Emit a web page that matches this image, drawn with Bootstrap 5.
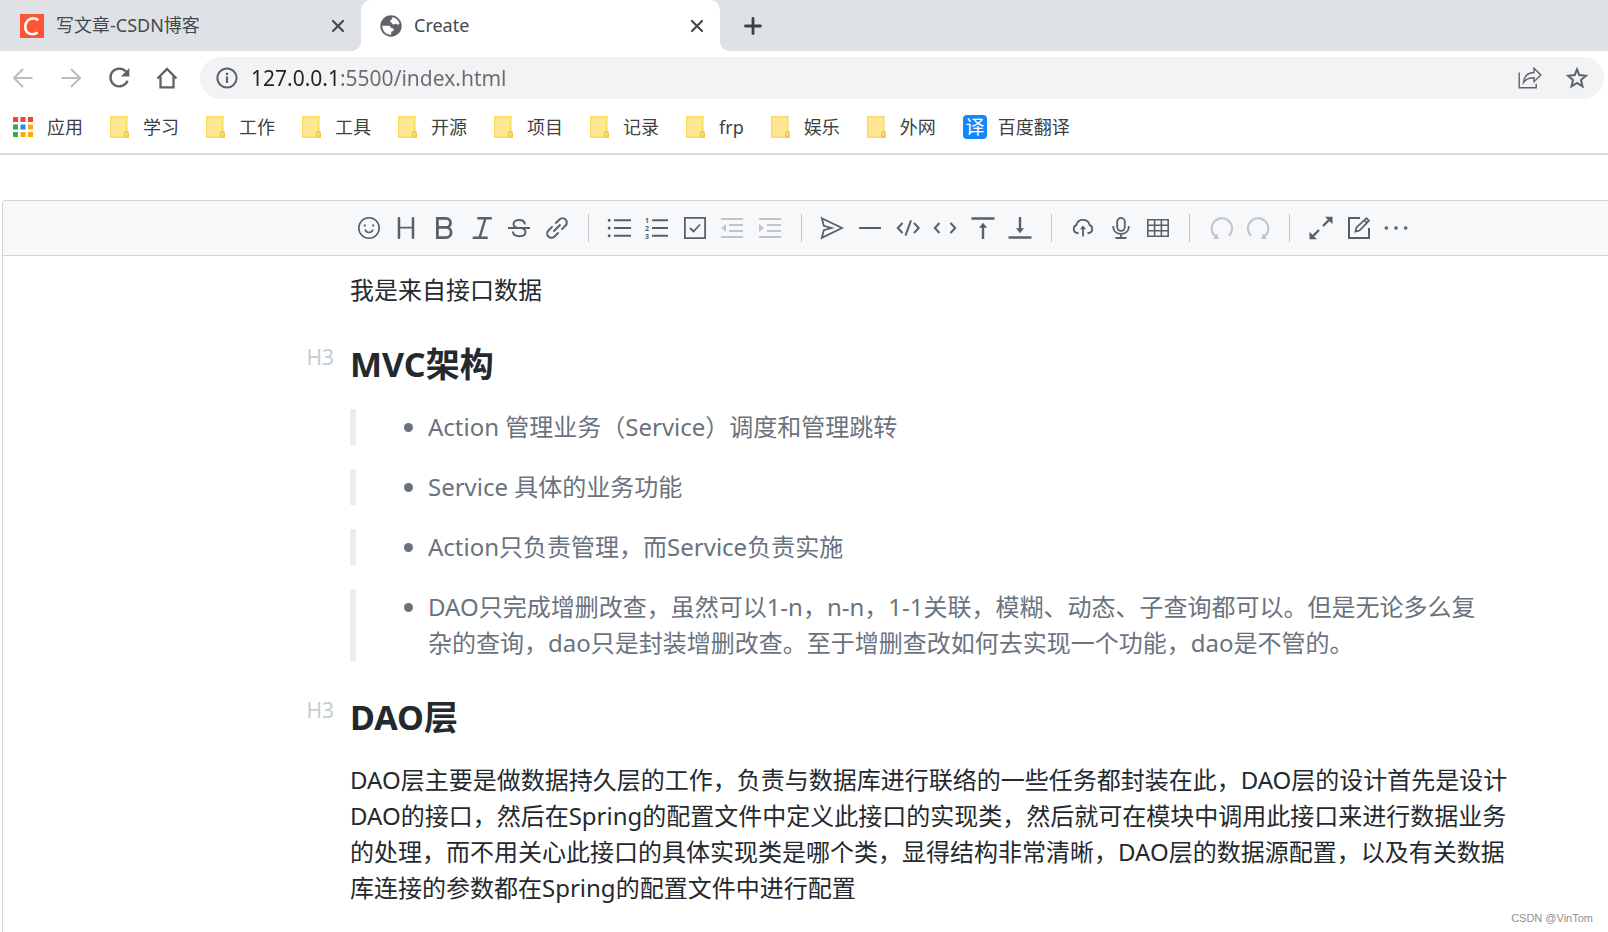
<!DOCTYPE html>
<html lang="zh-CN">
<head>
<meta charset="utf-8">
<meta name="viewport" content="width=device-width, initial-scale=1">
<title>Create</title>
<link href="https://cdn.jsdelivr.net/npm/bootstrap@5.3.0/dist/css/bootstrap.min.css" rel="stylesheet">
<style>
  body { font-family: "Noto Sans", "Noto Sans CJK SC", sans-serif; color: #24292e; background: #fff; font-size: 18px; }
  svg { display: block; flex: none; }
  button { border: 0; background: none; padding: 0; color: inherit; }

  /* browser chrome */
  .tab-strip { background: #dee1e6; height: 51px; color: #45494d; }
  .browser-tab { width: 361px; padding: 0 16px 0 20px; line-height: 51px; }
  .browser-tab a, .bookmarks a { color: inherit; text-decoration: none; }
  .browser-tab.current { background: #fff; border-radius: 10px 10px 0 0; width: 359px; padding-left: 19px; position: relative; }
  .browser-tab.current::before, .browser-tab.current::after { content: ""; position: absolute; bottom: 0; width: 10px; height: 10px; }
  .browser-tab.current::before { right: 100%; background: radial-gradient(circle at 0 0, #dee1e6 10px, #fff 10px); }
  .browser-tab.current::after { left: 100%; background: radial-gradient(circle at 100% 0, #dee1e6 10px, #fff 10px); }
  .nav-row { padding: 6px 4px 6px 0; color: #5f6368; }
  .nav-row > button { width: 48px; height: 42px; padding-right: 2px; }
  .nav-row > button:disabled { color: #babcbe; }
  .address { background: #f1f3f4; border-radius: 21px; height: 42px; margin-left: 8px; padding: 0 16px; }
  .address input { border: 0; outline: 0; min-width: 0; padding: 0; margin-left: 13px; font-size: 21px; line-height: 42px; color: #696c70;
    background: linear-gradient(to right, #202124 88px, #696c70 88px); -webkit-background-clip: text; background-clip: text; -webkit-text-fill-color: transparent; }
  .bookmarks { height: 50px; padding: 0 0 4px 13px; gap: 27px; border-bottom: 2px solid #dadada; color: #3c4043; line-height: 44px; }
  .bookmarks a { gap: 14px; }
  .bookmarks a:last-child { gap: 11px; }

  /* editor */
  .editor { margin: 45px 0 0 2px; border: solid #d1d5da; border-width: 1px 0 0 1px; border-radius: 4px 0 0 0; }
  .tool-strip { background: #f6f8fa; border-bottom: 1px solid #d1d5da; border-radius: 3px 0 0 0; height: 55px; padding-left: 347px; color: #586069; }
  .tool-set { width: 1065px; }
  .tool-set button { flex: 3 1 0; height: 54px; }
  .tool-set button:disabled { color: #c0c5ca; }
  .tool-set svg { margin: auto; overflow: visible; }
  .tool-sep { flex: 2 1 0; }
  .tool-sep::before { content: ""; display: block; width: 1px; height: 28px; margin: auto; background: #c3c6cb; }
  .article { padding: 16px 88px 24px 347px; font-size: 24px; line-height: 36px; }
  .article p { margin: 0; }
  .article h3 { font-size: 34px; line-height: 40px; font-weight: 700; margin: 36px 0 25px; position: relative; }
  .level-tag { position: absolute; right: 100%; top: 0; margin-right: 16px; font-size: 21px; line-height: 26px; font-weight: 400; color: #c8ccd0; }
  .article blockquote { border-left: 6px solid #eaecef; color: #6a737d; padding: 0 24px; margin: 0 0 24px; font-size: 24px; }
  .article blockquote ul { margin: 0; padding-left: 48px; }
  .watermark { position: absolute; right: 15px; bottom: 6px; font: 11px/16px "Liberation Sans", sans-serif; color: #8f8f8f; }
</style>
</head>
<body class="d-flex flex-column min-vh-100 position-relative">
<svg width="0" height="0" class="position-absolute" aria-hidden="true">
  <symbol id="folder" viewBox="0 0 19 22"><path d="M.7.7h16.1V15l1.5 1.2v5.1H.7z" fill="#ffe693" stroke="#fcd95c" stroke-width="1.4"/><path d="M14.8 21v-4.2q0-1.6 1.4-1.6t1.9 1.4V21z" fill="#ffe07a" stroke="#e9bd3e" stroke-width="1.1"/></symbol>
  <symbol id="cross" viewBox="0 0 14 14"><path d="M2 2l10 10M12 2L2 12" stroke="currentColor" stroke-width="2.2" stroke-linecap="round"/></symbol>
</svg>

<header>
  <nav class="tab-strip d-flex align-items-center" aria-label="标签页">
    <div class="browser-tab d-flex align-items-center">
      <svg width="24" height="24" viewBox="0 0 24 24"><path fill="#fc5531" d="M0 0h24v24H0z"/><path d="M18.2 6.2C15.500 3.800 10.500 3.600 7.700 6.600C4.700 9.900 4.300 15 7 18.200C9.500 21 14.500 20.700 17.700 18.500" fill="none" stroke="#fff" stroke-width="2.600"/></svg>
      <a href="#" class="flex-grow-1 ms-2 ps-1">写文章-CSDN博客</a>
      <button aria-label="关闭"><svg width="14" height="14"><use href="#cross"/></svg></button>
    </div>
    <div class="browser-tab current d-flex align-items-center">
      <svg width="22" height="22" viewBox="0 0 22 22"><circle cx="11" cy="11" r="10.700" fill="#5f6368"/><path fill="#fff" d="M12.500 2.300C16 3 18.800 5.500 19.600 9L17.500 9.700C16.500 8.500 14.800 8.700 13.900 9.600C12.800 9.600 12 9 11.900 7.800C10.700 7.600 10 6.600 10.300 5.500C11.300 4.800 12.300 4 12.500 2.300z"/><path fill="#fff" d="M2.300 10.800H8.500C10 10.800 11 11.700 11 13.100L13 13.600C14 14 14 15.400 13.200 16L11.200 16.800V19.700C6 20 2.200 16 2.300 10.800z"/></svg>
      <a href="#" class="flex-grow-1 ms-2 ps-1" aria-current="page">Create</a>
      <button aria-label="关闭"><svg width="14" height="14"><use href="#cross"/></svg></button>
    </div>
    <button class="ms-4" aria-label="新标签页"><svg width="18" height="18" viewBox="0 0 18 18"><path d="M9 1.500v15M1.500 9h15" stroke="#3c4043" stroke-width="2.800" stroke-linecap="round"/></svg></button>
  </nav>

  <div class="nav-row d-flex align-items-center">
    <button disabled aria-label="后退"><svg class="mx-auto" width="20" height="20" viewBox="0 0 20 20" fill="none" stroke="currentColor" stroke-width="2"><path d="M19.500 10H1.500M10 1L1 10l9 9"/></svg></button>
    <button disabled aria-label="前进"><svg class="mx-auto" width="20" height="20" viewBox="0 0 20 20" fill="none" stroke="currentColor" stroke-width="2"><path d="M.5 10h18M10 1l9 9-9 9"/></svg></button>
    <button aria-label="刷新"><svg class="mx-auto" width="22" height="22" viewBox="0 0 22 22"><path d="M18 4.600A8.900 8.900 0 1 0 19.600 13.800" fill="none" stroke="currentColor" stroke-width="2.300"/><path d="M21.300 1v8.500h-8.500z" fill="currentColor"/></svg></button>
    <button aria-label="主页"><svg class="mx-auto" width="22" height="22" viewBox="0 0 22 22" fill="none" stroke="currentColor" stroke-width="2.300"><path d="M1.500 11.500L11 2l9.500 9.500M4.500 9.500v10.800h13V9.500"/></svg></button>
    <form class="address d-flex align-items-center flex-grow-1">
      <svg width="22" height="22" viewBox="0 0 22 22"><circle cx="11" cy="11" r="9.600" fill="none" stroke="currentColor" stroke-width="2"/><path d="M11 9.500v6.500M11 5.700v2.200" stroke="currentColor" stroke-width="2.200"/></svg>
      <input class="flex-grow-1" type="text" aria-label="地址" value="127.0.0.1:5500/index.html">
      <button type="button" aria-label="分享"><svg width="24" height="22" viewBox="0 0 24 22" fill="none" stroke="currentColor" stroke-width="1.400"><path d="M1.200 5.500v15.300h17v-4"/><path d="M5.500 15.500C6 9 9.500 5.800 16 5.500V1.200L22.800 8L16 14.700V10.800C11 10.700 8 12 5.500 15.500z"/></svg></button>
      <button type="button" class="ms-4" aria-label="收藏"><svg width="22" height="22" viewBox="0 0 22 22"><path d="M11 2.300L13.300 8.100L19.900 8.700L15 13L16.500 19.400L11 16L5.500 19.400L7 13L2.100 8.700L8.700 8.100z" fill="none" stroke="currentColor" stroke-width="2"/></svg></button>
    </form>
  </div>

  <nav class="bookmarks d-flex align-items-center" aria-label="书签">
    <a href="#" class="d-flex align-items-center"><svg width="20" height="20" viewBox="0 0 20 20"><path fill="#f44336" d="M0 0h5v5H0zM7.500 0h5v5h-5zM15 0h5v5h-5z"/><path fill="#34a853" d="M0 7.500h5v5H0zM0 15h5v5H0z"/><path fill="#1a8cf5" d="M7.500 7.500h5v5h-5z"/><path fill="#fba905" d="M15 7.500h5v5h-5zM7.500 15h5v5h-5zM15 15h5v5h-5z"/></svg>应用</a>
    <a href="#" class="d-flex align-items-center"><svg width="19" height="22"><use href="#folder"/></svg>学习</a>
    <a href="#" class="d-flex align-items-center"><svg width="19" height="22"><use href="#folder"/></svg>工作</a>
    <a href="#" class="d-flex align-items-center"><svg width="19" height="22"><use href="#folder"/></svg>工具</a>
    <a href="#" class="d-flex align-items-center"><svg width="19" height="22"><use href="#folder"/></svg>开源</a>
    <a href="#" class="d-flex align-items-center"><svg width="19" height="22"><use href="#folder"/></svg>项目</a>
    <a href="#" class="d-flex align-items-center"><svg width="19" height="22"><use href="#folder"/></svg>记录</a>
    <a href="#" class="d-flex align-items-center"><svg width="19" height="22"><use href="#folder"/></svg>frp</a>
    <a href="#" class="d-flex align-items-center"><svg width="19" height="22"><use href="#folder"/></svg>娱乐</a>
    <a href="#" class="d-flex align-items-center"><svg width="19" height="22"><use href="#folder"/></svg>外网</a>
    <a href="#" class="d-flex align-items-center"><svg width="24" height="24" viewBox="0 0 24 24"><rect width="24" height="24" rx="4" fill="#1487fb"/><text x="12" y="19" text-anchor="middle" font-size="19" fill="#fff">译</text></svg>百度翻译</a>
  </nav>
</header>

<main class="editor flex-grow-1">
  <div class="tool-strip">
    <div class="tool-set d-flex align-items-center" role="toolbar" aria-label="编辑工具">
      <button aria-label="表情"><svg width="22" height="22" fill="none" stroke="currentColor" stroke-width="1.600"><circle cx="11" cy="11" r="10.200"/><path d="M7 12.500q1 3 4 3t4-3"/><path d="M6.800 7.500v2M15.200 7.500v2" stroke-width="2"/></svg></button>
      <button aria-label="标题"><svg width="22" height="22" fill="none" stroke="currentColor" stroke-width="2.500" stroke-linecap="round"><path d="M4 1.200v19.600M18 1.200v19.600"/><path d="M4 10.700h14" stroke-width="1.800"/></svg></button>
      <button aria-label="粗体"><svg width="22" height="22" fill="none" stroke="currentColor" stroke-width="2.800"><path d="M4.400 1.400H13a4.500 4.500 0 0 1 0 9H4.400M13 10.400a5 5 0 0 1 0 10.200H4.400V.1"/></svg></button>
      <button aria-label="斜体"><svg width="22" height="22" fill="none" stroke="currentColor" stroke-width="2.400"><path d="M6.300 1.200h14.500M1.700 20.800h15M14.500 1.200L8.500 20.800"/></svg></button>
      <button aria-label="删除线"><svg width="22" height="22" fill="none" stroke="currentColor" stroke-width="2"><path d="M0 11h22"/><path d="M17 7.500C16.700 4.700 14.400 3 11.200 3C7.800 3 5.500 4.700 5.500 7C5.500 9 7 10.300 9.500 11M13.500 11C16.300 11.800 17.500 13.200 17.500 15C17.500 17.600 15 19.200 11.500 19.200C7.500 19.200 5 17.500 4.800 14.500"/></svg></button>
      <button aria-label="链接"><svg width="22" height="22" fill="none" stroke="currentColor" stroke-width="2"><path transform="rotate(-45 11 11)" d="M9 6.700H3.200a4.300 4.300 0 0 0 0 8.600H9M13 6.700h5.800a4.300 4.300 0 0 1 0 8.600H13M6 11h10"/></svg></button>
      <span class="tool-sep"></span>
      <button aria-label="无序列表"><svg width="22" height="22" fill="none" stroke="currentColor" stroke-width="2"><path d="M6 3.200h17M6 11h17M6 18.800h17"/><path stroke-width="3" stroke-linecap="round" d="M1.200 3.200h.01M1.200 11h.01M1.200 18.800h.01"/></svg></button>
      <button aria-label="有序列表"><svg width="22" height="22" fill="currentColor"><path stroke="currentColor" stroke-width="2" d="M6 3.200h16M6 11h16M6 18.800h16"/><g font-size="7" font-weight="700"><text x="-1" y="5.500">1</text><text x="-1" y="13.500">2</text><text x="-1" y="21.500">3</text></g></svg></button>
      <button aria-label="任务列表"><svg width="22" height="22" fill="none" stroke="currentColor" stroke-width="1.800"><path d="M.9.9h20.200v20.200H.9zM6 11l3.500 3.500 6.500-7"/></svg></button>
      <button disabled aria-label="减少缩进"><svg width="22" height="22" fill="none" stroke="currentColor" stroke-width="2"><path d="M0 2h22M8 8h14M8 14h14M0 20h22"/><path d="M5 7v8L.5 11z" fill="currentColor" stroke="none"/></svg></button>
      <button disabled aria-label="增加缩进"><svg width="22" height="22" fill="none" stroke="currentColor" stroke-width="2"><path d="M0 2h22M8 8h14M8 14h14M0 20h22"/><path d="M0 7v8l5-4z" fill="currentColor" stroke="none"/></svg></button>
      <span class="tool-sep"></span>
      <button aria-label="引用"><svg width="22" height="22" fill="none" stroke="currentColor" stroke-width="1.800"><path d="M.8 1.200L21 11L.8 20.800L2.800 13.200L10.500 11L2.800 8.800z"/></svg></button>
      <button aria-label="分隔线"><svg width="22" height="22" stroke="currentColor" stroke-width="2"><path d="M0 11h22"/></svg></button>
      <button aria-label="代码块"><svg width="22" height="22" fill="none" stroke="currentColor" stroke-width="2"><path d="M5.500 6L.8 11l4.700 5M17 6l4.700 5-4.700 5M14 3.300L8.500 18.700"/></svg></button>
      <button aria-label="行内代码"><svg width="22" height="22" fill="none" stroke="currentColor" stroke-width="2"><path d="M5.500 6L.8 11l4.700 5M16.500 6l4.700 5-4.700 5"/></svg></button>
      <button aria-label="上方插入"><svg width="22" height="22" fill="none" stroke="currentColor" stroke-width="2.400"><path d="M-.5 1.500h23M11 22V8"/><path d="M11 5.800l4 5H7z" fill="currentColor" stroke="none"/></svg></button>
      <button aria-label="下方插入"><svg width="22" height="22" fill="none" stroke="currentColor" stroke-width="2.400"><path d="M-.5 20.500h23M11 0v14"/><path d="M11 16.200l4-5H7z" fill="currentColor" stroke="none"/></svg></button>
      <span class="tool-sep"></span>
      <button aria-label="上传"><svg width="22" height="22" fill="none" stroke="currentColor" stroke-width="1.800"><path d="M6.500 16H5A4.100 4.100 0 0 1 4.300 8.200A6.900 6.900 0 0 1 17.700 8.200A4.100 4.100 0 0 1 17 16H15.500M11 19.500V11"/><path d="M11 8.500l3 3.800H8z" fill="currentColor" stroke="none"/></svg></button>
      <button aria-label="录音"><svg width="22" height="22" fill="none" stroke="currentColor" stroke-width="1.800"><rect x="7.200" y=".9" width="7.600" height="13" rx="3.800"/><path d="M3.300 9v1.500a7.700 6.500 0 0 0 15.400 0V9M11 17v4M5.500 21h11"/></svg></button>
      <button aria-label="表格"><svg width="22" height="22" fill="none" stroke="currentColor" stroke-width="1.600"><path d="M.8 2.800h20.400v16.400H.8zM.8 8.300h20.400M.8 13.700h20.400M7.600 2.800v16.400M14.400 2.800v16.400"/></svg></button>
      <span class="tool-sep"></span>
      <button disabled aria-label="撤销"><svg width="22" height="22" fill="none" stroke="currentColor" stroke-width="2"><path d="M19 18.800A10.200 10.200 0 1 0 5.500 19.500"/><path d="M3 21.800L9 22L7 16.500z" fill="currentColor" stroke="none"/></svg></button>
      <button disabled aria-label="重做"><svg width="22" height="22" fill="none" stroke="currentColor" stroke-width="2"><path d="M3 18.800A10.200 10.200 0 1 1 16.500 19.500"/><path d="M19 21.800L13 22L15 16.500z" fill="currentColor" stroke="none"/></svg></button>
      <span class="tool-sep"></span>
      <button aria-label="全屏"><svg width="22" height="22" stroke="currentColor" stroke-width="2.400" fill="none"><path d="M13 9l6-6M9 13l-6 6"/><path d="M22.500-.3v7.500L15-.3zM-.5 22.300v-7.500l7.500 7.500z" fill="currentColor" stroke="none"/></svg></button>
      <button aria-label="编辑模式"><svg width="22" height="22" fill="none" stroke="currentColor" stroke-width="2"><path d="M12 1H1v20h20V11"/><path stroke-width="1.700" d="M7.500 14.500L8.500 10.500L18.500 1.200L21 3.700L11.500 13.500zM16.500 3.500l2.200 2.200"/></svg></button>
      <button aria-label="更多"><svg width="22" height="22" fill="currentColor"><circle cx="1.300" cy="11" r="1.800"/><circle cx="11" cy="11" r="1.800"/><circle cx="20.700" cy="11" r="1.800"/></svg></button>
    </div>
  </div>

  <article class="article">
    <p>我是来自接口数据</p>
    <h3><span class="level-tag">H3</span>MVC架构</h3>
    <blockquote><ul><li>Action 管理业务（Service）调度和管理跳转</li></ul></blockquote>
    <blockquote><ul><li>Service 具体的业务功能</li></ul></blockquote>
    <blockquote><ul><li>Action只负责管理，而Service负责实施</li></ul></blockquote>
    <blockquote><ul><li>DAO只完成增删改查，虽然可以1-n，n-n，1-1关联，模糊、动态、子查询都可以。但是无论多么复杂的查询，dao只是封装增删改查。至于增删查改如何去实现一个功能，dao是不管的。</li></ul></blockquote>
    <h3><span class="level-tag">H3</span>DAO层</h3>
    <p>DAO层主要是做数据持久层的工作，负责与数据库进行联络的一些任务都封装在此，DAO层的设计首先是设计DAO的接口，然后在Spring的配置文件中定义此接口的实现类，然后就可在模块中调用此接口来进行数据业务的处理，而不用关心此接口的具体实现类是哪个类，显得结构非常清晰，DAO层的数据源配置，以及有关数据库连接的参数都在Spring的配置文件中进行配置</p>
  </article>
</main>
<div class="watermark">CSDN @VinTom</div>
<script src="https://cdn.jsdelivr.net/npm/bootstrap@5.3.0/dist/js/bootstrap.bundle.min.js"></script>
</body>
</html>
